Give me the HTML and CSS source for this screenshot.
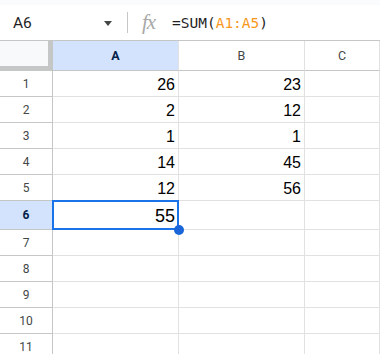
FILE: index.html
```html
<!DOCTYPE html>
<html>
<head>
    <title>Sheet</title>
    <link rel="stylesheet" href="styles.css">
</head>
<body>
<div class="topStrip"></div>
<div class="formulaBar">
    <div class="nameBox">
        <span class="cellName">A6</span>
        <span class="dropArrow"></span>
    </div>
    <div class="divider"></div>
    <span class="fx">fx</span>
    <span class="formula">=SUM(<span class="ref">A1:A5</span>)</span>
</div>
<div class="sheet">
    <div class="corner"></div>
    <div class="colHead active">A</div>
    <div class="colHead">B</div>
    <div class="colHead">C</div>

    <div class="rowHead">1</div><div class="cell">26</div><div class="cell">23</div><div class="cell"></div>
    <div class="rowHead">2</div><div class="cell">2</div><div class="cell">12</div><div class="cell"></div>
    <div class="rowHead">3</div><div class="cell">1</div><div class="cell">1</div><div class="cell"></div>
    <div class="rowHead">4</div><div class="cell">14</div><div class="cell">45</div><div class="cell"></div>
    <div class="rowHead">5</div><div class="cell">12</div><div class="cell">56</div><div class="cell"></div>
    <div class="rowHead active">6</div><div class="cell selected big">55<span class="handle"></span></div><div class="cell"></div><div class="cell"></div>
    <div class="rowHead">7</div><div class="cell"></div><div class="cell"></div><div class="cell"></div>
    <div class="rowHead">8</div><div class="cell"></div><div class="cell"></div><div class="cell"></div>
    <div class="rowHead">9</div><div class="cell"></div><div class="cell"></div><div class="cell"></div>
    <div class="rowHead">10</div><div class="cell"></div><div class="cell"></div><div class="cell"></div>
    <div class="rowHead">11</div><div class="cell"></div><div class="cell"></div><div class="cell"></div>
</div>
</body>
</html>
```

FILE: styles.css
```css
html, body {
    width: 100%;
    height: 100%;
    padding: 0px;
    margin: 0px;
    overflow: hidden;
    background-color: #FFF;
}

.topStrip {
    height: 5px;
    background-color: #f9fbfd;
}

.formulaBar {
    display: flex;
    align-items: center;
    height: 35px;
    border-bottom: 1px solid #c4c7c5;
    box-sizing: border-box;
    height: 36px;
}

.nameBox {
    display: flex;
    align-items: center;
    justify-content: space-between;
    width: 127px;
    padding: 0px 15px 0px 13px;
    box-sizing: border-box;
}

.cellName {
    font-family: Roboto, sans-serif;
    font-size: 15.5px;
    color: #1f1f1f;
}

.dropArrow {
    width: 0px;
    height: 0px;
    border-left: 4.5px solid transparent;
    border-right: 4.5px solid transparent;
    border-top: 5px solid #444746;
    margin-top: 1px;
}

.divider {
    width: 1px;
    height: 21px;
    background-color: #c4c7c5;
}

.fx {
    width: 18px;
    margin-left: 14px;
    font-family: "Liberation Serif", serif;
    font-style: italic;
    font-size: 21px;
    color: #a8a8a8;
    letter-spacing: -1px;
}

.formula {
    margin-left: 12px;
    font-family: "DejaVu Sans Mono", monospace;
    font-size: 14.5px;
    color: #1f1f1f;
}

.ref {
    color: #f7981d;
}

.sheet {
    display: grid;
    grid-template-columns: 53px 126px 126px 1fr;
    grid-template-rows: 30px repeat(5, 26px) 29px repeat(5, 26px);
}

.sheet > div {
    box-sizing: border-box;
    border-right: 1px solid #e1e1e1;
    border-bottom: 1px solid #e1e1e1;
}

.sheet > .corner {
    background-color: #f8f9fa;
    border-right: 5px solid #c4c7c5;
    border-bottom: 5px solid #c4c7c5;
}

.sheet > .colHead,
.sheet > .rowHead {
    display: flex;
    align-items: center;
    justify-content: center;
    font-family: Roboto, sans-serif;
    font-size: 12px;
    color: #444746;
    border-color: #c4c7c5;
}

.sheet > .colHead {
    border-right-color: #e1e1e1;
    font-size: 12.5px;
}

.sheet > .active {
    background-color: #d3e3fd;
    color: #041e49;
    font-weight: bold;
}

.cell {
    display: flex;
    align-items: flex-end;
    justify-content: flex-end;
    padding: 0px 3px 3px 0px;
    font-family: "Liberation Sans", Arial, sans-serif;
    font-size: 16px;
    line-height: 16px;
    color: #000;
}

.cell.big {
    font-size: 18px;
    line-height: 18px;
    padding-bottom: 4px;
}

.selected {
    position: relative;
}

.selected:after {
    content: '';
    position: absolute;
    top: -1px;
    left: -1px;
    right: -1px;
    bottom: -1px;
    border: 2px solid #1a73e8;
}

.handle {
    position: absolute;
    right: -6px;
    bottom: -6px;
    width: 10px;
    height: 10px;
    border-radius: 50%;
    background-color: #1a66d8;
    z-index: 2;
}
```
